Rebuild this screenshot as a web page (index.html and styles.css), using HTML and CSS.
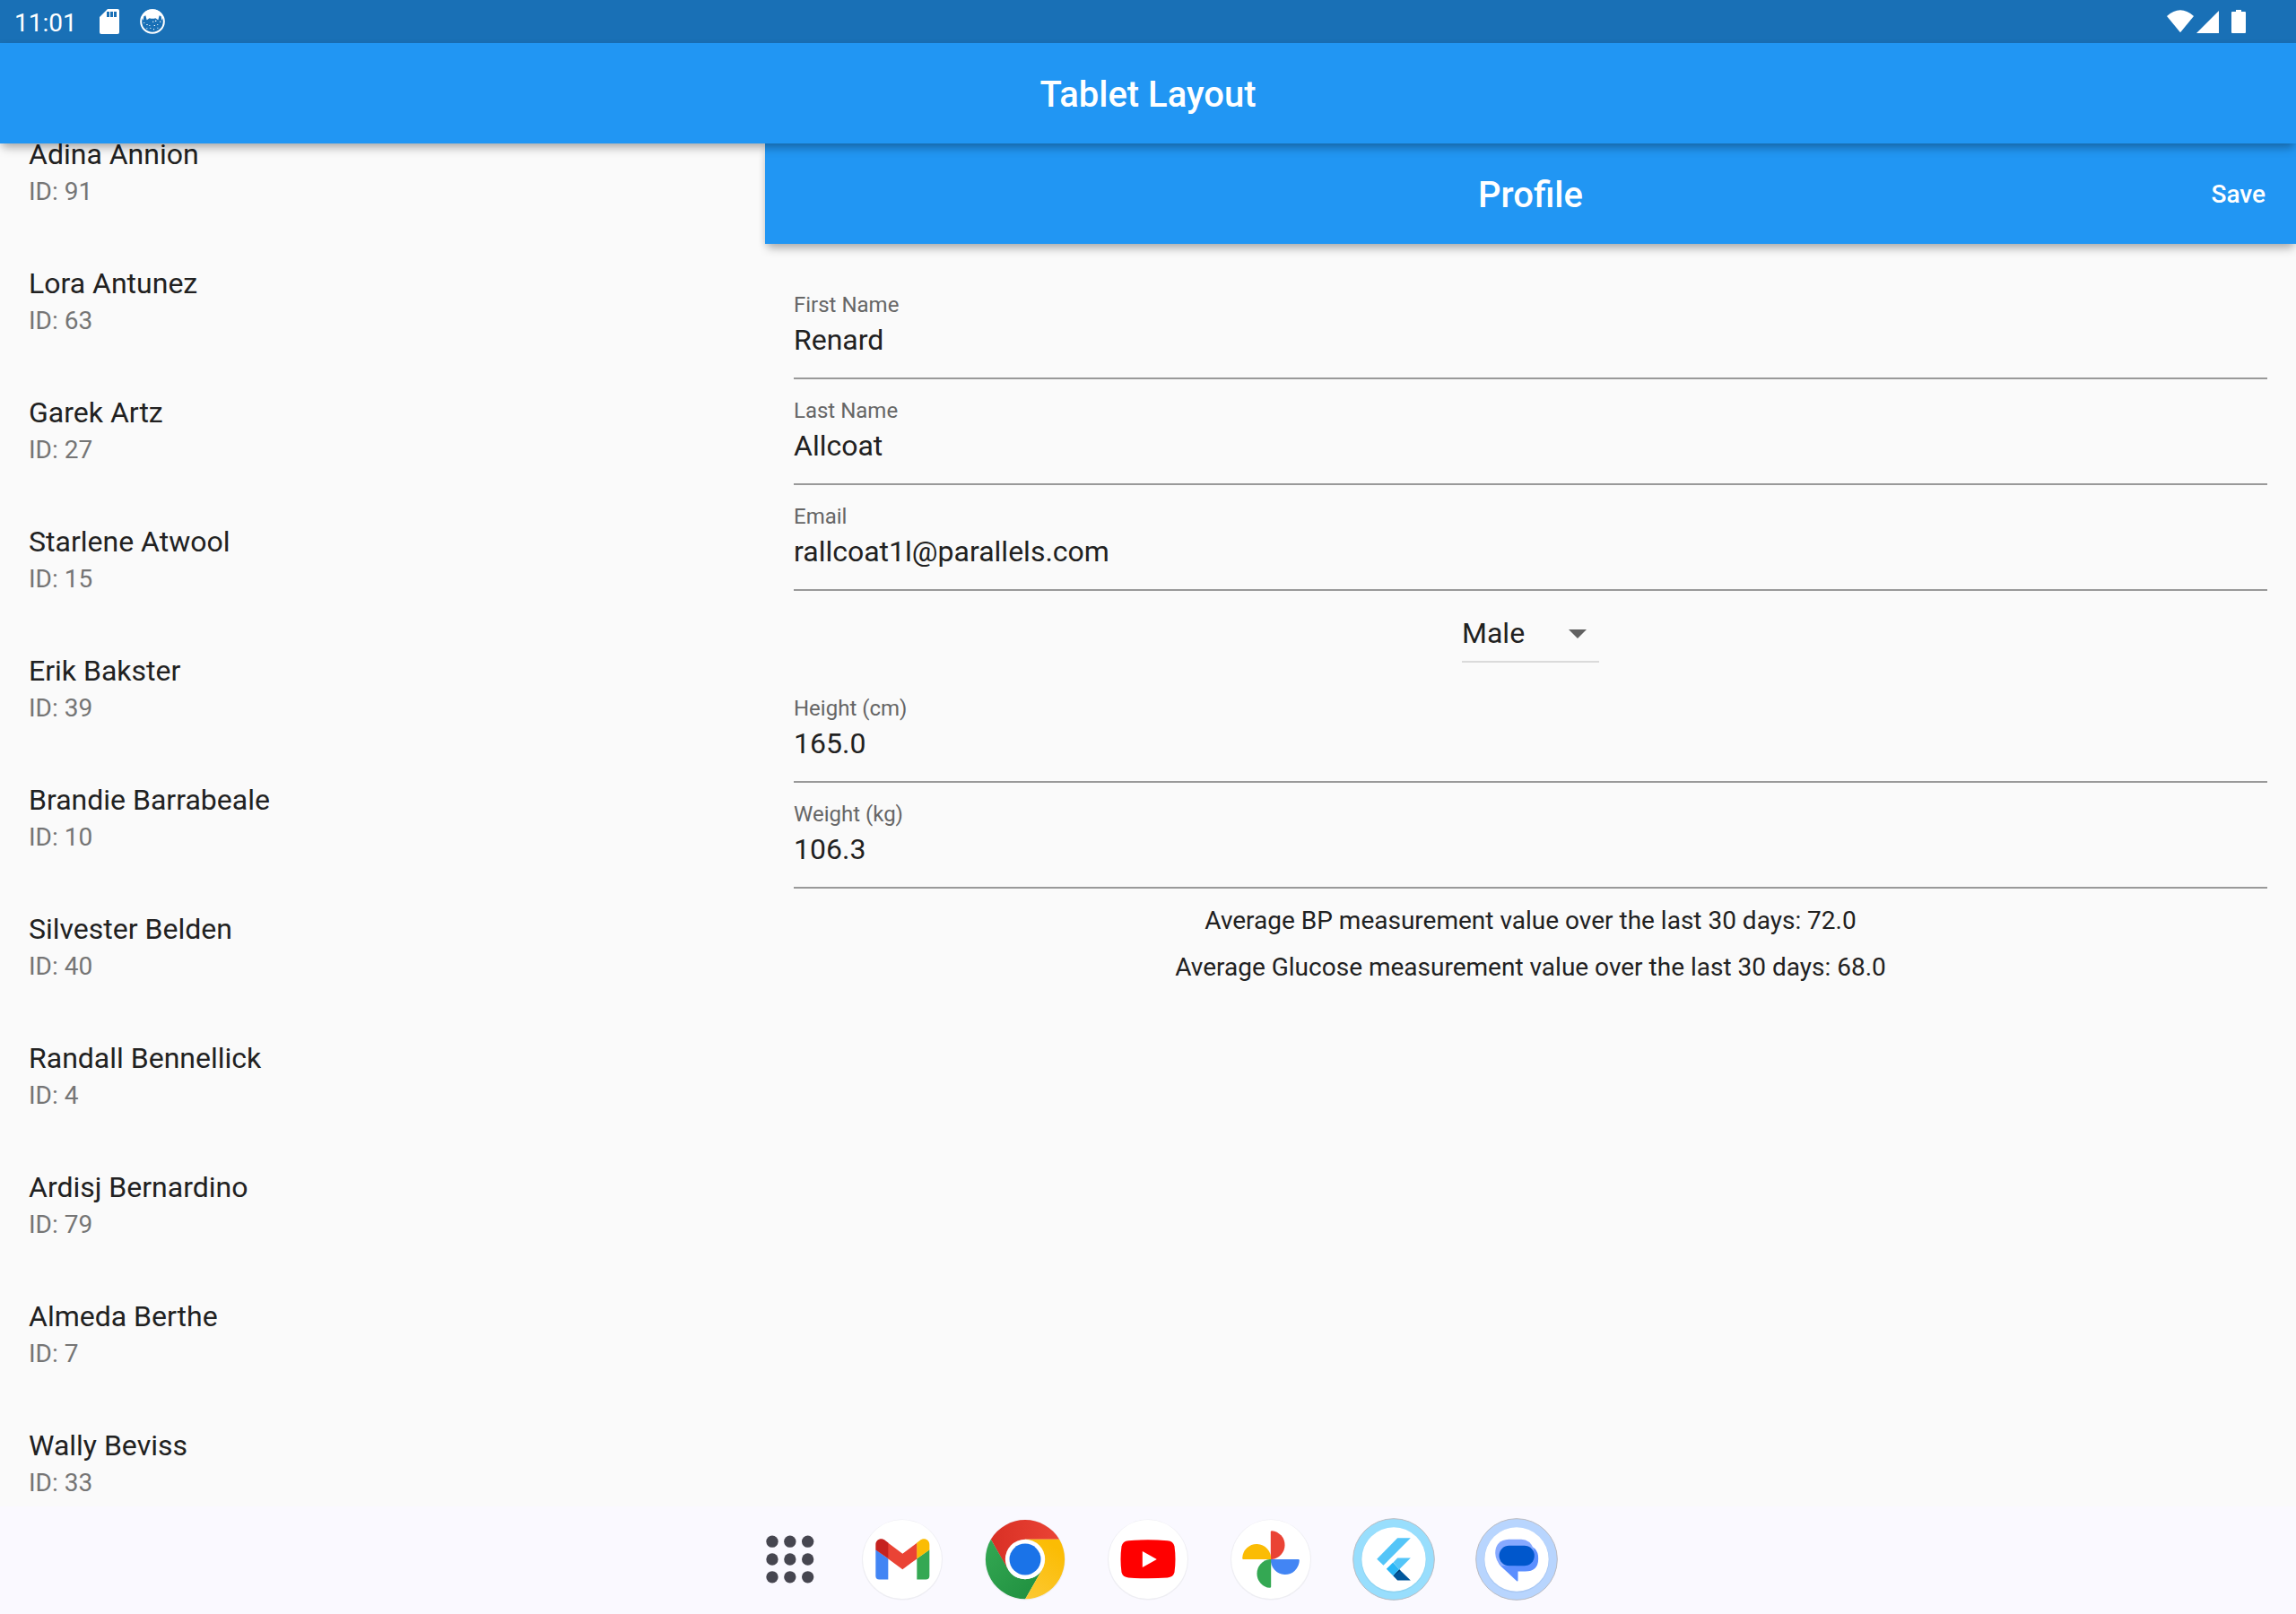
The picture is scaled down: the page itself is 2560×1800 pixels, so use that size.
FILE: index.html
```html
<!DOCTYPE html>
<html lang="en">
<head>
<meta charset="utf-8">
<title>Tablet Layout</title>
<link rel="stylesheet" href="styles.css">
</head>
<body>
<div class="screen">
  <div class="status-bar">
    <span class="clock">11:01</span>
    <svg class="sd-icon" viewBox="0 0 24 28"><path fill="#fff" fill-rule="evenodd" d="M9 0h11a2 2 0 0 1 2 2v24a2 2 0 0 1-2 2H2a2 2 0 0 1-2-2V9zM8 3v6h3V3zM12 3v6h3V3zM16 3v6h3V3z"/></svg>
    <svg class="cat-icon" viewBox="468 30 84 84">
      <circle cx="510" cy="72" r="38.500" fill="none" stroke="#fff" stroke-width="6"/>
      <path fill="#fff" d="M474 58Q484 31 510 31T546 58l-5 10-2-13-6-3-4 15-9-6q-10 3-20 0l-9 6-4-15-6 3-2 13z"/>
      <path fill="#fff" d="M480 75h4v2h-4zM490 81h4v3h-4zM499 84h3v3h-3zM510 71h4v3h-4zM519 68h4v4h-4zM515 84h4v3h-4zM525 82h4v2h-4zM534 71h4v3h-4zM502 93h3v3h-3zM513 96h3v4h-3zM490 94h3v3h-3zM526 92h3v3h-3z"/>
    </svg>
    <svg class="signal-icons" viewBox="165 30 270 84">
      <g fill="#fff">
        <path d="M168 54Q213 14 258 54L213 109z"/>
        <path d="M267 111L342 36V111z"/>
        <path d="M399 33h18v6h12q3 0 3 3v66q0 3-3 3h-42q-3 0-3-3V42q0-3 3-3h12z"/>
      </g>
    </svg>
  </div>
  <header class="app-bar"><h1 class="bar-title">Tablet Layout</h1></header>
  <main class="panes">
    <ul class="patients">
      <li class="patient"><span class="name">Adina Annion</span><span class="id">ID: 91</span></li>
      <li class="patient"><span class="name">Lora Antunez</span><span class="id">ID: 63</span></li>
      <li class="patient"><span class="name">Garek Artz</span><span class="id">ID: 27</span></li>
      <li class="patient"><span class="name">Starlene Atwool</span><span class="id">ID: 15</span></li>
      <li class="patient"><span class="name">Erik Bakster</span><span class="id">ID: 39</span></li>
      <li class="patient"><span class="name">Brandie Barrabeale</span><span class="id">ID: 10</span></li>
      <li class="patient"><span class="name">Silvester Belden</span><span class="id">ID: 40</span></li>
      <li class="patient"><span class="name">Randall Bennellick</span><span class="id">ID: 4</span></li>
      <li class="patient"><span class="name">Ardisj Bernardino</span><span class="id">ID: 79</span></li>
      <li class="patient"><span class="name">Almeda Berthe</span><span class="id">ID: 7</span></li>
      <li class="patient"><span class="name">Wally Beviss</span><span class="id">ID: 33</span></li>
    </ul>
    <section class="detail">
      <header class="detail-bar">
        <h2 class="bar-title">Profile</h2>
        <span class="save">Save</span>
      </header>
      <div class="form">
        <div class="field"><span class="label">First Name</span><span class="value">Renard</span></div>
        <div class="field"><span class="label">Last Name</span><span class="value">Allcoat</span></div>
        <div class="field"><span class="label">Email</span><span class="value">rallcoat1l@parallels.com</span></div>
        <div class="dropdown">
          <span class="value">Male</span>
          <svg class="caret" viewBox="0 0 20 10"><path d="M0 0h20L10 10z" fill="#616161"/></svg>
        </div>
        <div class="field"><span class="label">Height (cm)</span><span class="value">165.0</span></div>
        <div class="field"><span class="label">Weight (kg)</span><span class="value">106.3</span></div>
        <p class="summary">Average BP measurement value over the last 30 days: 72.0</p>
        <p class="summary">Average Glucose measurement value over the last 30 days: 68.0</p>
      </div>
    </section>
  </main>
  <nav class="dock">
    <svg class="apps" viewBox="101 124.500 168 168"><g fill="#464650">
      <circle cx="125" cy="149" r="20"/><circle cx="184.500" cy="149" r="20"/><circle cx="244" cy="149" r="20"/>
      <circle cx="125" cy="208.500" r="20"/><circle cx="184.500" cy="208.500" r="20"/><circle cx="244" cy="208.500" r="20"/>
      <circle cx="125" cy="268" r="20"/><circle cx="184.500" cy="268" r="20"/><circle cx="244" cy="268" r="20"/>
    </g></svg>
    <svg class="app" viewBox="419 67.500 282 282">
      <circle cx="560" cy="210" r="135" fill="#eeeef3"/>
      <circle cx="560" cy="208.500" r="132" fill="#fff"/>
      <path fill="#4285f4" d="M471 176l42 30v70h-30q-12 0-12-12z"/>
      <path fill="#34a853" d="M609 206l42-30v88q0 12-12 12h-30z"/>
      <path fill="#ea4335" d="M512 153l49 37 49-37v53l-49 36-49-36z"/>
      <path fill="#c5221f" d="M471 177v-17c0-17 18-26 33-14l9 7v53z"/>
      <path fill="#fbbc04" d="M609 153l9-7c15-12 33-3 33 14v17l-42 29z"/>
    </svg>
    <svg class="app" viewBox="829.500 67.500 282 282">
      <defs>
        <linearGradient id="red" x1="0" x2="1"><stop offset="0" stop-color="#d93025"/><stop offset="1" stop-color="#ea4335"/></linearGradient>
        <linearGradient id="yellow" x1="0" y1="1" x2=".5" y2="0"><stop offset="0" stop-color="#fcc934"/><stop offset="1" stop-color="#fbbc04"/></linearGradient>
        <linearGradient id="green" x1="1" y1="1" x2="0" y2="0"><stop offset="0" stop-color="#1e8e3e"/><stop offset="1" stop-color="#34a853"/></linearGradient>
      </defs>
      <circle cx="970.500" cy="210" r="135" fill="#eeeef3"/>
      <path fill="url(#red)" d="M856 142A133 133 0 0 1 1085 142H970.500L912 242z"/>
      <path fill="url(#green)" d="M856 142L912.900 241.700A66.500 66.500 0 0 0 1028 241.700L971 341.500A133 133 0 0 1 856 142z"/>
      <path fill="url(#yellow)" d="M970.500 142H1085A133 133 0 0 1 971 341.500L1028 241.700z"/>
      <circle cx="970.500" cy="208.500" r="66.500" fill="#fff"/>
      <circle cx="970.500" cy="208.500" r="52.500" fill="#1a73e8"/>
    </svg>
    <svg class="app" viewBox="1240.500 67.500 282 282">
      <circle cx="1381.500" cy="210" r="135" fill="#eeeef3"/>
      <circle cx="1381.500" cy="208.500" r="132" fill="#fff"/>
      <path fill="#f00" d="M1316 146Q1381 141 1447 146Q1466 147 1470 165Q1476 208 1470 252Q1466 268 1447 270Q1381 275 1316 270Q1297 268 1293 252Q1287 208 1293 165Q1297 147 1316 146z"/>
      <path fill="#fff" d="M1363 181.500L1411 208.500L1363 235.500z"/>
    </svg>
    <svg class="app" viewBox="181.500 67.500 282 282">
      <circle cx="322.500" cy="210" r="135" fill="#eeeef3"/>
      <circle cx="322.500" cy="208.500" r="132" fill="#fff"/>
      <path fill="#ea4335" d="M322 208.500V117q0-4 4-4a48 48 0 0 1 0 95.500z"/>
      <path fill="#4285f4" d="M322 208.500h92q4 0 4 4a48 49 0 0 1-96-4z"/>
      <path fill="#34a853" d="M323 208.500V300q0 4-4 4a48 48 0 0 1 0-95.500z"/>
      <path fill="#fbbc04" d="M323 208.500h-92q-4 0-4-4a48 49 0 0 1 96 4z"/>
    </svg>
    <svg class="app" viewBox="592.500 67.500 282 282">
      <circle cx="733.500" cy="208.500" r="136" fill="#98defd" stroke="#bbbcc2" stroke-width="3"/>
      <circle cx="733.500" cy="211" r="109" fill="#8fd4f2"/>
      <circle cx="733.500" cy="208.500" r="107" fill="#fff"/>
      <path fill="#54c5f8" d="M746 137.500h44L699 229l-22-21z"/>
      <path fill="#54c5f8" d="M746 204h44l-38 38-20-23z"/>
      <path fill="#01579b" d="M731 263l21-21 38 37h-44z"/>
      <path fill="#013a70" d="M731 263l21-21 4 5z"/>
      <path fill="#29b6f6" d="M709 241l22-22 21 23-21 21z"/>
    </svg>
    <svg class="app" viewBox="1003.500 67.500 282 282">
      <circle cx="1144.500" cy="208.500" r="136" fill="#b8d5fe" stroke="#bbbcc2" stroke-width="3"/>
      <circle cx="1144.500" cy="211" r="109" fill="#abc9f4"/>
      <circle cx="1144.500" cy="208.500" r="107" fill="#fff"/>
      <path fill="#5c8fff" d="M1145 163h28q44 0 44 43t-44 43h-24v30q0 5-4 2L1092 232q-18-18-6-50z"/>
      <path fill="#87a9ff" d="M1118 141.500h42q30 0 43 35l-60 54h-50q-19-17-20-43 1-44 45-46z"/>
      <rect x="1086" y="163" width="118" height="67.500" rx="33.700" fill="#0057cc"/>
    </svg>
  </nav>
</div>
</body>
</html>
```
FILE: styles.css
```css
* { box-sizing: border-box; }

body {
  margin: 0;
  font-family: Roboto, "Liberation Sans", sans-serif;
  color: #212121;
}

.screen {
  display: flex;
  flex-direction: column;
  width: 2560px;
  height: 1800px;
  overflow: hidden;
  background: #fafafa;
}

.status-bar {
  display: flex;
  flex: none;
  align-items: flex-start;
  height: 48px;
  padding: 0 55px 0 16px;
  background: #1970b6;
}

.clock {
  width: 95px;
  color: #fff;
  font-size: 28px;
  line-height: 51px;
}

.sd-icon { width: 24px; height: 28px; margin: 10px 21px 0 0; }
.cat-icon { width: 28px; height: 28px; margin-top: 10px; }
.signal-icons { width: 90px; height: 28px; margin: 10px 0 0 auto; }

.app-bar,
.detail-bar {
  display: flex;
  flex: none;
  align-items: center;
  justify-content: center;
  height: 112px;
  background: #2196f3;
  color: #fff;
  box-shadow: 0 8px 10px -3px rgba(0, 0, 0, .26), 0 2px 8px rgba(0, 0, 0, .1);
}

.app-bar { position: relative; z-index: 2; }

.bar-title {
  margin: 0;
  padding-top: 3px;
  font-size: 40px;
  font-weight: 500;
  line-height: 48px;
}

.panes {
  display: grid;
  grid-template-columns: 853px 1fr;
  flex: 1;
  min-height: 0;
}

.patients {
  margin: 0;
  padding: 0;
  overflow: hidden;
  list-style: none;
}

.patient {
  display: flex;
  flex-direction: column;
  height: 144px;
  padding: 24px 32px 0;
}

.patient:first-child { margin-top: -32px; }

.name { font-size: 32px; line-height: 40px; }
.id { color: #757575; font-size: 28px; line-height: 43px; }

.detail-bar {
  display: grid;
  grid-template-columns: 1fr auto 1fr;
  padding: 0 34px;
}

.detail-bar .bar-title { grid-column: 2; }

.save {
  justify-self: end;
  padding-top: 1px;
  font-size: 28px;
  font-weight: 500;
  line-height: 40px;
}

.form {
  display: flex;
  flex-direction: column;
  padding: 33px 32px 0;
}

.field {
  display: flex;
  flex-direction: column;
  gap: 3px;
  height: 118px;
  padding-top: 19px;
  border-bottom: 2px solid #999;
}

.label { color: #666; font-size: 24px; line-height: 32px; }
.value { font-size: 32px; line-height: 40px; }

.dropdown {
  display: flex;
  align-items: center;
  justify-content: space-between;
  align-self: center;
  width: 153px;
  height: 64px;
  margin: 16px 0;
  padding: 9px 14px 9px 0;
  border-bottom: 2px solid #dadada;
}

.caret { width: 20px; height: 10px; margin-top: 2px; }

.summary {
  margin: 0;
  font-size: 28px;
  line-height: 52px;
  text-align: center;
}

.field + .summary { margin-top: 10px; }

.dock {
  display: flex;
  flex: none;
  align-items: center;
  gap: 43px;
  height: 120px;
  padding: 0 0 2px 853px;
  background: #faf9ff;
}

.apps { flex: none; width: 56px; height: 56px; margin-right: 7px; }
.app { flex: none; width: 94px; height: 94px; }
```
